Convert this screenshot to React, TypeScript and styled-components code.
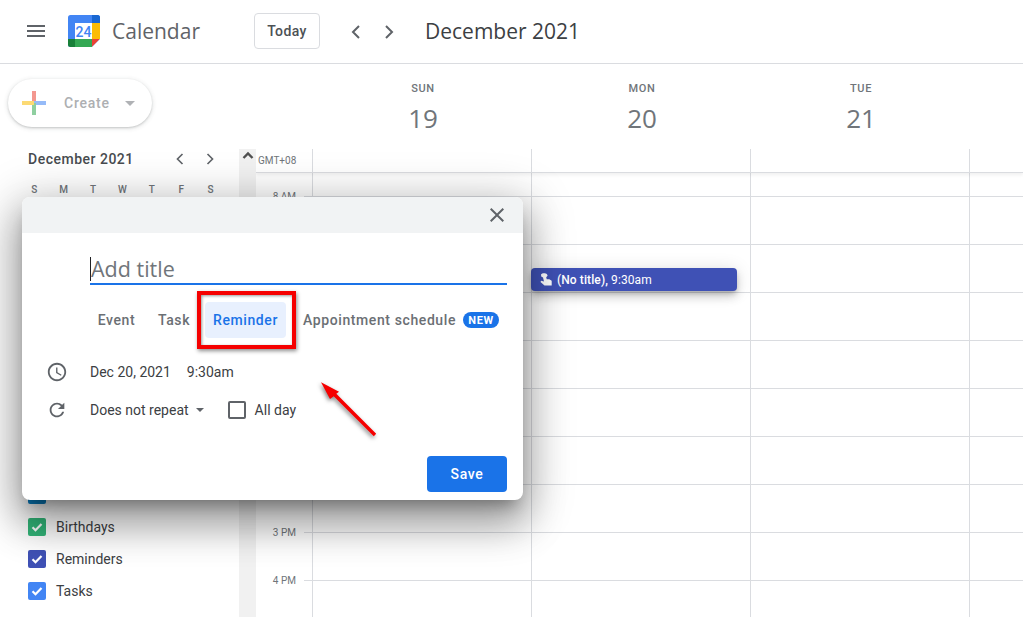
import React from "react";
import styled, { createGlobalStyle } from "styled-components";

const Global = createGlobalStyle`
  html, body { margin: 0; padding: 0; background: #fff; }
  body { font-family: Roboto, "Liberation Sans", sans-serif; color: #3c4043; }
  * { box-sizing: border-box; }
`;

const Page = styled.div`
  position: relative;
  width: 1023px;
  height: 617px;
  overflow: hidden;
  display: flex;
  flex-direction: column;
`;

const TopBar = styled.header`
  height: 64px;
  flex: none;
  display: flex;
  align-items: center;
  border-bottom: 1px solid #dadce0;
  padding-left: 24px;
`;

const MenuIcon = styled.svg`
  width: 24px;
  height: 24px;
  fill: #5f6368;
  margin-right: 20px;
  margin-top: -2px;
`;

const Logo = styled.svg`
  width: 32px;
  height: 32px;
  margin-right: 12px;
  margin-top: -2px;
`;

const Brand = styled.span`
  font-family: "Open Sans", Roboto, sans-serif;
  font-size: 21px;
  color: #5f6368;
  width: 142px;
  margin-top: -1px;
`;

const TodayButton = styled.button`
  width: 66px;
  height: 36px;
  border: 1px solid #dadce0;
  border-radius: 4px;
  background: #fff;
  font-family: Roboto, sans-serif;
  font-size: 14px;
  font-weight: 500;
  letter-spacing: 0.4px;
  color: #4d5155;
  margin-right: 24px;
  margin-top: -2px;
  padding: 0;
`;

const NavPair = styled.div<{ $gap: number }>`
  display: flex;
  align-items: center;
  gap: ${(p) => p.$gap}px;
`;

const Chevron = styled.svg<{ $size?: number }>`
  width: ${(p) => p.$size ?? 24}px;
  height: ${(p) => p.$size ?? 24}px;
  fill: none;
  stroke: #5f6368;
  stroke-width: 2;
`;

const MonthTitle = styled.h1`
  margin: -1px 0 0 24px;
  font-family: "Open Sans", Roboto, sans-serif;
  font-size: 21px;
  font-weight: 400;
  color: #3c4043;
`;

const Body = styled.div`
  flex: 1;
  display: flex;
  min-height: 0;
`;

const Sidebar = styled.aside`
  width: 239px;
  flex: none;
  display: flex;
  flex-direction: column;
  padding-bottom: 10px;
`;

const CreateButton = styled.div`
  width: 144px;
  height: 48px;
  margin: 15px 0 0 8px;
  border-radius: 24px;
  background: #fff;
  box-shadow: 0 1px 2px 0 rgba(60, 64, 67, 0.2), 0 1px 4px 1px rgba(60, 64, 67, 0.12);
  display: flex;
  align-items: center;
  padding-left: 14px;
  font-size: 14px;
  font-weight: 500;
  letter-spacing: 0.75px;
  color: #adafb2;
`;

const PlusIcon = styled.svg`
  width: 24px;
  height: 24px;
  margin-right: 18px;
  opacity: 0.55;
`;

const CreateCaret = styled.span`
  width: 0;
  height: 0;
  margin-left: 15px;
  border: 5px solid transparent;
  border-top-color: #b0b2b5;
  border-bottom: 0;
`;

const MiniHead = styled.div`
  display: flex;
  align-items: center;
  margin: 20px 0 0 28px;
  height: 24px;
  font-size: 14px;
  font-weight: 500;
  letter-spacing: 0.5px;
  color: #474b4f;
`;

const MiniNav = styled.div`
  display: flex;
  gap: 10px;
  margin-left: 36px;
`;

const WeekLetters = styled.div`
  display: grid;
  grid-template-columns: repeat(7, 29.4px);
  margin: 12px 0 0 19.5px;
  font-size: 10px;
  font-weight: 500;
  line-height: 14px;
  color: #70757a;
  text-align: center;
`;

const CalendarList = styled.ul`
  list-style: none;
  margin: auto 0 0 0;
  padding: 0;
`;

const CalendarItem = styled.li`
  height: 32px;
  display: flex;
  align-items: center;
  padding-left: 28px;
  font-size: 14px;
  color: #3c4043;
  gap: 10px;
`;

const CheckBox = styled.span<{ $color: string }>`
  width: 18px;
  height: 18px;
  border-radius: 2px;
  background: ${(p) => p.$color};
  display: flex;
  align-items: center;
  justify-content: center;
`;

const Main = styled.main`
  flex: 1;
  display: flex;
  flex-direction: column;
  min-width: 0;
`;

const DayHeader = styled.div`
  height: 85px;
  flex: none;
  display: grid;
  grid-template-columns: repeat(4, 219px);
  padding-left: 74.5px;
  padding-top: 18px;
`;

const DayHead = styled.div`
  display: flex;
  flex-direction: column;
  align-items: center;
  color: #70757a;
`;

const DayName = styled.span`
  font-size: 11px;
  font-weight: 500;
  letter-spacing: 0.6px;
  line-height: 14px;
`;

const DayNumber = styled.span`
  font-family: "Open Sans", Roboto, sans-serif;
  font-size: 26px;
  line-height: 44px;
`;

const GridArea = styled.div`
  flex: 1;
  display: flex;
  min-height: 0;
`;

const ScrollRail = styled.div`
  width: 17px;
  flex: none;
  background: #f1f1f1;
  display: flex;
  justify-content: center;
`;

const Timeline = styled.div`
  flex: 1;
  min-width: 0;
  overflow: hidden;
`;

const AllDayRow = styled.div`
  height: 24px;
  display: grid;
  grid-template-columns: 56px repeat(4, 219px);
  border-bottom: 1px solid #dadce0;
  box-shadow: 0 2px 3px rgba(60, 64, 67, 0.08);
  position: relative;
`;

const Zone = styled.span`
  font-size: 10px;
  color: #70757a;
  padding: 6px 0 0 2px;
`;

const HourRow = styled.div<{ $height: number }>`
  height: ${(p) => p.$height}px;
  display: grid;
  grid-template-columns: 56px repeat(4, 219px);
`;

const HourLabel = styled.div`
  position: relative;
  display: flex;
  align-items: flex-end;
  justify-content: flex-end;
  padding-right: 16px;
  font-size: 10px;
  line-height: 14px;
  color: #70757a;

  span {
    margin-bottom: -7px;
  }

  &::after {
    content: "";
    position: absolute;
    right: 0;
    bottom: 0;
    width: 8px;
    height: 1px;
    background: #dadce0;
  }
`;

const Slot = styled.div`
  border-left: 1px solid #dadce0;
  border-bottom: 1px solid #dadce0;
`;

const AllDaySlot = styled.div`
  border-left: 1px solid #dadce0;
`;

const Modal = styled.section`
  position: absolute;
  left: 22px;
  top: 197px;
  width: 501px;
  height: 303px;
  background: #fff;
  border-radius: 8px;
  display: flex;
  flex-direction: column;
  box-shadow: 0 24px 38px 3px rgba(0, 0, 0, 0.26), 0 9px 46px 8px rgba(0, 0, 0, 0.22),
    0 11px 15px -7px rgba(0, 0, 0, 0.3);
`;

const ModalBar = styled.div`
  height: 36px;
  flex: none;
  background: #f1f3f4;
  border-radius: 8px 8px 0 0;
  display: flex;
  align-items: center;
  justify-content: flex-end;
  padding-right: 14px;
`;

const CloseIcon = styled.svg`
  width: 24px;
  height: 24px;
  fill: #5f6368;
`;

const ModalBody = styled.div`
  flex: 1;
  display: flex;
  flex-direction: column;
  padding: 18px 16px 8px 68px;
`;

const TitleField = styled.div`
  height: 34px;
  border-bottom: 2px solid #1a73e8;
  font-family: "Open Sans", Roboto, sans-serif;
  font-size: 21.5px;
  line-height: 32px;
  padding-top: 3px;
  color: #70757a;
  display: flex;
  align-items: center;
`;

const Caret = styled.span`
  width: 1px;
  height: 24px;
  background: #202124;
`;

const Tabs = styled.div`
  display: flex;
  align-items: center;
  margin: 17px 0 0 0;
  height: 36px;
  font-size: 14px;
  font-weight: 500;
  letter-spacing: 0.6px;
  color: #6b6f74;
`;

const Tab = styled.span<{ $active?: boolean; $width: number }>`
  width: ${(p) => p.$width}px;
  height: 36px;
  display: flex;
  align-items: center;
  justify-content: center;
  border-radius: 4px;
  flex: none;
  color: ${(p) => (p.$active ? "#1a73e8" : "#6b6f74")};
  background: ${(p) => (p.$active ? "#e8f0fe" : "transparent")};
`;

const WideTab = styled.span`
  margin-left: 17px;
  white-space: nowrap;
  flex: none;
  width: 152px;
`;

const NewBadge = styled.span`
  margin-left: 8px;
  width: 36px;
  height: 16px;
  border-radius: 8px;
  background: #1a73e8;
  color: #fff;
  font-size: 11px;
  font-weight: 700;
  letter-spacing: 0.6px;
  display: flex;
  align-items: center;
  justify-content: center;
  flex: none;
`;

const InfoRow = styled.div<{ $top: number }>`
  display: flex;
  align-items: center;
  height: 24px;
  margin: ${(p) => p.$top}px 0 0 -44px;
  font-size: 14px;
  color: #3c4043;
`;

const RowIcon = styled.svg`
  width: 22px;
  height: 22px;
  fill: #5f6368;
  margin-right: 22px;
  flex: none;
`;

const TimeText = styled.span`
  margin-left: 16px;
`;

const RepeatCaret = styled.span`
  width: 0;
  height: 0;
  margin-left: 7px;
  border: 4.5px solid transparent;
  border-top-color: #5f6368;
  border-bottom: 0;
`;

const EmptyBox = styled.span`
  width: 18px;
  height: 18px;
  border: 2px solid #5f6368;
  border-radius: 2px;
  margin: 0 9px 0 24px;
`;

const ModalFooter = styled.div`
  margin-top: auto;
  display: flex;
  justify-content: flex-end;
`;

const SaveButton = styled.button`
  width: 80px;
  height: 36px;
  border: none;
  border-radius: 4px;
  background: #1a73e8;
  color: #fff;
  font-family: Roboto, sans-serif;
  font-size: 14px;
  font-weight: 500;
  letter-spacing: 0.65px;
  padding: 0;
`;

const EventChip = styled.div`
  position: absolute;
  left: 531px;
  top: 268px;
  width: 206px;
  height: 23px;
  border-radius: 4px;
  background: #3f51b5;
  color: #fff;
  font-size: 12px;
  letter-spacing: 0.1px;
  display: flex;
  align-items: center;
  padding-left: 7px;
  gap: 4px;
  box-shadow: 0 6px 10px 0 rgba(0, 0, 0, 0.14), 0 1px 18px 0 rgba(0, 0, 0, 0.12),
    0 3px 5px -1px rgba(0, 0, 0, 0.2);

  b {
    font-weight: 500;
  }
`;

const RedBox = styled.div`
  position: absolute;
  left: 197px;
  top: 291px;
  width: 99px;
  height: 58px;
  border: 4px solid #f50000;
  box-shadow: 1px 2px 4px rgba(0, 0, 0, 0.45), inset 1px 1px 3px rgba(0, 0, 0, 0.4);
`;

const Arrow = styled.svg`
  position: absolute;
  left: 316px;
  top: 376px;
  width: 66px;
  height: 66px;
  filter: drop-shadow(-1px 2px 2px rgba(0, 0, 0, 0.5));
`;

const rows = ["8 AM", "9 AM", "10 AM", "11 AM", "12 PM", "1 PM", "2 PM", "3 PM", "4 PM", ""];

const Left = () => <path d="M15 6l-6 6 6 6" />;
const Right = () => <path d="M9 6l6 6-6 6" />;
const Tick = () => (
  <svg width="14" height="14" viewBox="0 0 14 14" fill="none" stroke="#fff" strokeWidth="2.2">
    <path d="M2.5 7.2l3 3 6-6.2" />
  </svg>
);

export default function App() {
  return (
    <Page>
      <Global />
      <TopBar>
        <MenuIcon viewBox="0 0 24 24">
          <path d="M3 18h18v-2H3v2zm0-5h18v-2H3v2zm0-7v2h18V6H3z" />
        </MenuIcon>
        <Logo viewBox="0 0 32 32">
          <rect x="0" y="0" width="32" height="32" rx="2.5" fill="#4285f4" />
          <path d="M24 0h5.5A2.5 2.5 0 0 1 32 2.5V8h-8z" fill="#1967d2" />
          <rect x="24" y="8" width="8" height="16" fill="#fbbc04" />
          <rect x="7" y="24" width="17" height="8" fill="#34a853" />
          <path d="M0 24h7v8H2.5A2.5 2.5 0 0 1 0 29.5z" fill="#188038" />
          <path d="M24 24h8l-8 8z" fill="#ea4335" />
          <path d="M32 24v8h-8z" fill="#fff" />
          <rect x="7" y="8" width="17" height="16" fill="#fff" />
          <text x="15.5" y="21.5" textAnchor="middle" fontFamily="Roboto, sans-serif" fontSize="14" fontWeight="500" fill="#4285f4">24</text>
        </Logo>
        <Brand>Calendar</Brand>
        <TodayButton>Today</TodayButton>
        <NavPair $gap={9}>
          <Chevron><Left /></Chevron>
          <Chevron><Right /></Chevron>
        </NavPair>
        <MonthTitle>December 2021</MonthTitle>
      </TopBar>
      <Body>
        <Sidebar>
          <CreateButton>
            <PlusIcon viewBox="0 0 24 24">
              <rect x="10" y="0" width="4" height="12" fill="#ea4335" />
              <rect x="12" y="10" width="12" height="4" fill="#4285f4" />
              <rect x="10" y="12" width="4" height="12" fill="#34a853" />
              <rect x="0" y="10" width="12" height="4" fill="#fbbc04" />
            </PlusIcon>
            Create
            <CreateCaret />
          </CreateButton>
          <MiniHead>
            December 2021
            <MiniNav>
              <Chevron $size={20} viewBox="0 0 24 24"><Left /></Chevron>
              <Chevron $size={20} viewBox="0 0 24 24"><Right /></Chevron>
            </MiniNav>
          </MiniHead>
          <WeekLetters>
            {["S", "M", "T", "W", "T", "F", "S"].map((d, i) => (
              <span key={i}>{d}</span>
            ))}
          </WeekLetters>
          <CalendarList>
            <CalendarItem><CheckBox $color="#0b80c3"><Tick /></CheckBox></CalendarItem>
            <CalendarItem><CheckBox $color="#33b679"><Tick /></CheckBox>Birthdays</CalendarItem>
            <CalendarItem><CheckBox $color="#3f51b5"><Tick /></CheckBox>Reminders</CalendarItem>
            <CalendarItem><CheckBox $color="#4285f4"><Tick /></CheckBox>Tasks</CalendarItem>
          </CalendarList>
        </Sidebar>
        <Main>
          <DayHeader>
            <DayHead><DayName>SUN</DayName><DayNumber>19</DayNumber></DayHead>
            <DayHead><DayName>MON</DayName><DayNumber>20</DayNumber></DayHead>
            <DayHead><DayName>TUE</DayName><DayNumber>21</DayNumber></DayHead>
          </DayHeader>
          <GridArea>
            <ScrollRail>
              <svg width="14" height="14" viewBox="0 0 14 14" fill="none" stroke="#505050" strokeWidth="2.4">
                <path d="M2.5 9L7 4.5 11.5 9" />
              </svg>
            </ScrollRail>
            <Timeline>
              <AllDayRow>
                <Zone>GMT+08</Zone>
                <AllDaySlot /><AllDaySlot /><AllDaySlot /><AllDaySlot />
              </AllDayRow>
              {rows.map((label, i) => (
                <HourRow key={i} $height={i === 0 ? 24 : 48}>
                  <HourLabel><span>{label}</span></HourLabel>
                  <Slot /><Slot /><Slot /><Slot />
                </HourRow>
              ))}
            </Timeline>
          </GridArea>
        </Main>
      </Body>

      <EventChip>
        <svg width="15" height="15" viewBox="0 0 15 15" fill="#fff">
          <path d="M3 2.5C4 1 7.5 .8 9 2.3l.6 1.4-1.4 1.6.5 1.9h2.6l2.4 1.6V13.5H6.5L2.5 10l.6-1.2L6 9.5 5 5.6 3.2 4.6z" />
        </svg>
        <span><b>(No title),</b> 9:30am</span>
      </EventChip>

      <Modal>
        <ModalBar>
          <CloseIcon viewBox="0 0 24 24">
            <path d="M19 6.41L17.59 5 12 10.59 6.41 5 5 6.41 10.59 12 5 17.59 6.41 19 12 13.41 17.59 19 19 17.59 13.41 12z" />
          </CloseIcon>
        </ModalBar>
        <ModalBody>
          <TitleField><Caret />Add title</TitleField>
          <Tabs>
            <Tab $width={53}>Event</Tab>
            <Tab $width={62}>Task</Tab>
            <Tab $width={81} $active>Reminder</Tab>
            <WideTab>Appointment schedule</WideTab>
            <NewBadge>NEW</NewBadge>
          </Tabs>
          <InfoRow $top={22}>
            <RowIcon viewBox="0 0 24 24">
              <path d="M11.99 2C6.47 2 2 6.48 2 12s4.47 10 9.99 10C17.52 22 22 17.52 22 12S17.52 2 11.99 2zM12 20c-4.42 0-8-3.58-8-8s3.58-8 8-8 8 3.58 8 8-3.58 8-8 8zm.5-13H11v6l5.25 3.15.75-1.23-4.5-2.67z" />
            </RowIcon>
            Dec 20, 2021
            <TimeText>9:30am</TimeText>
          </InfoRow>
          <InfoRow $top={14}>
            <RowIcon viewBox="0 0 24 24">
              <path d="M17.65 6.35A7.958 7.958 0 0 0 12 4c-4.42 0-7.99 3.58-7.99 8s3.57 8 7.99 8c3.73 0 6.84-2.55 7.73-6h-2.08A5.99 5.99 0 0 1 12 18c-3.31 0-6-2.69-6-6s2.69-6 6-6c1.66 0 3.14.69 4.22 1.78L13 11h7V4l-2.35 2.35z" />
            </RowIcon>
            Does not repeat
            <RepeatCaret />
            <EmptyBox />
            All day
          </InfoRow>
          <ModalFooter>
            <SaveButton>Save</SaveButton>
          </ModalFooter>
        </ModalBody>
      </Modal>

      <RedBox />
      <Arrow viewBox="0 0 66 66">
        <path d="M5 6.3L23 15.7 20.3 17.7 60.2 57.8 57.8 60.2 17.7 20.3 14 23z" fill="#f50000" />
      </Arrow>
    </Page>
  );
}
